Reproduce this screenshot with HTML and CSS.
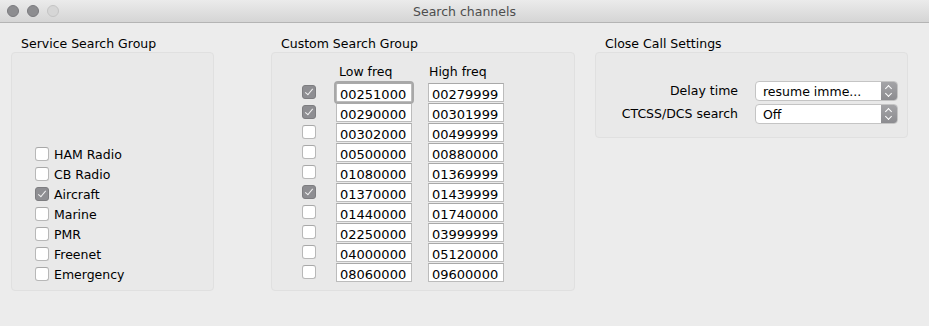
FILE: index.html
```html
<!DOCTYPE html>
<html lang="en">
<head>
  <meta charset="UTF-8">
  <title>Search channels</title>
  <link rel="stylesheet" href="styles.css">
</head>
<body>

  <div class="titlebar">
    <div class="lights">
      <span class="light"></span>
      <span class="light"></span>
      <span class="light off"></span>
    </div>
    <div class="title">Search channels</div>
  </div>

  <div class="content">

    <div class="group service">
      <div class="group-title">Service Search Group</div>
      <div class="group-box">
        <label class="check-row"><span class="check"></span>HAM Radio</label>
        <label class="check-row"><span class="check"></span>CB Radio</label>
        <label class="check-row"><span class="check on"></span>Aircraft</label>
        <label class="check-row"><span class="check"></span>Marine</label>
        <label class="check-row"><span class="check"></span>PMR</label>
        <label class="check-row"><span class="check"></span>Freenet</label>
        <label class="check-row"><span class="check"></span>Emergency</label>
      </div>
    </div>

    <div class="group custom">
      <div class="group-title">Custom Search Group</div>
      <div class="group-box">
        <div class="freq-head">
          <span class="head-low">Low freq</span>
          <span class="head-high">High freq</span>
        </div>
        <div class="freq-row"><span class="check on"></span><span class="field focused">00251000</span><span class="field">00279999</span></div>
        <div class="freq-row"><span class="check on"></span><span class="field">00290000</span><span class="field">00301999</span></div>
        <div class="freq-row"><span class="check"></span><span class="field">00302000</span><span class="field">00499999</span></div>
        <div class="freq-row"><span class="check"></span><span class="field">00500000</span><span class="field">00880000</span></div>
        <div class="freq-row"><span class="check"></span><span class="field">01080000</span><span class="field">01369999</span></div>
        <div class="freq-row"><span class="check on"></span><span class="field">01370000</span><span class="field">01439999</span></div>
        <div class="freq-row"><span class="check"></span><span class="field">01440000</span><span class="field">01740000</span></div>
        <div class="freq-row"><span class="check"></span><span class="field">02250000</span><span class="field">03999999</span></div>
        <div class="freq-row"><span class="check"></span><span class="field">04000000</span><span class="field">05120000</span></div>
        <div class="freq-row"><span class="check"></span><span class="field">08060000</span><span class="field">09600000</span></div>
      </div>
    </div>

    <div class="group closecall">
      <div class="group-title">Close Call Settings</div>
      <div class="group-box">
        <div class="setting-row">
          <span class="setting-label">Delay time</span>
          <div class="popup"><span class="popup-value">resume imme...</span><span class="popup-arrows"></span></div>
        </div>
        <div class="setting-row">
          <span class="setting-label">CTCSS/DCS search</span>
          <div class="popup"><span class="popup-value">Off</span><span class="popup-arrows"></span></div>
        </div>
      </div>
    </div>

  </div>

</body>
</html>
```

FILE: styles.css
```css
body {
  margin: 0;
  background-color: #ececec;
  font-family: "DejaVu Sans", "Lucida Grande", sans-serif;
  font-size: 12.5px;
  color: #000;
  width: 929px;
  height: 326px;
  overflow: hidden;
}

/* title bar */

.titlebar {
  height: 22px;
  background: linear-gradient(#ebebeb, #d5d5d5);
  border-bottom: 1px solid #b4b4b4;
  display: flex;
  align-items: center;
  position: relative;
}

.lights {
  display: flex;
  gap: 8px;
  padding-left: 7px;
}

.light {
  box-sizing: border-box;
  width: 12px;
  height: 12px;
  border-radius: 50%;
  background-color: #8d8d90;
  border: 1px solid #7a7a7e;
}

.light.off {
  background-color: #d6d6d6;
  border-color: #c4c4c4;
}

.title {
  position: absolute;
  left: 0;
  right: 0;
  text-align: center;
  color: #4d4d4d;
  font-size: 12.5px;
}

/* groups */

.content {
  display: flex;
  padding: 13px 0 0 11px;
}

.group {
  display: flex;
  flex-direction: column;
}

.group-title {
  height: 16px;
  line-height: 16px;
  padding-left: 10px;
}

.group-box {
  box-sizing: border-box;
  background-color: #e9e9e9;
  border: 1px solid #e0e0e0;
  border-radius: 4px;
}

.service {
  width: 203px;
}

.service .group-box {
  height: 239px;
  display: flex;
  flex-direction: column;
  justify-content: flex-end;
  padding: 0 0 6px 23px;
}

.custom {
  width: 304px;
  margin-left: 57px;
}

.custom .group-box {
  height: 239px;
  padding: 9px 0 0 30px;
}

.closecall {
  width: 313px;
  margin-left: 20px;
}

.closecall .group-box {
  height: 86px;
  padding: 27px 9px 0 0;
}

/* checkboxes */

.check-row {
  display: flex;
  align-items: center;
  height: 20px;
  gap: 5px;
}

.check {
  box-sizing: border-box;
  width: 14px;
  height: 14px;
  background-color: #fff;
  border: 1px solid #b8b8b8;
  border-top-color: #a8a8a8;
  border-radius: 3px;
  position: relative;
  flex-shrink: 0;
}

.check.on {
  background-color: #8e8e92;
  border-color: #7d7d80;
}

.check.on::after {
  content: "";
  position: absolute;
  left: 4px;
  top: 1px;
  width: 3px;
  height: 7px;
  border: solid #f2f2f2;
  border-width: 0 1.3px 1.3px 0;
  transform: rotate(40deg);
}

/* frequency table */

.freq-head {
  height: 20px;
  line-height: 20px;
  position: relative;
}

.head-low {
  margin-left: 37px;
}

.head-high {
  position: absolute;
  left: 127px;
}

.freq-row {
  display: flex;
  align-items: center;
  height: 20px;
}

.freq-row .check {
  margin-right: 20px;
}

.field {
  box-sizing: border-box;
  width: 76px;
  height: 19px;
  background-color: #fff;
  border: 1px solid #bcbcbc;
  border-top-color: #a9a9a9;
  padding: 2px 0 0 3px;
  line-height: 17px;
  font-size: 13px;
}

.field + .field {
  margin-left: 16px;
}

.field.focused {
  box-shadow: 0 0 0 2px #a8a8a8;
  border-radius: 2px;
}

/* settings */

.setting-row {
  display: flex;
  align-items: center;
  justify-content: flex-end;
  height: 21px;
  margin-bottom: 2px;
}

.setting-label {
  margin-right: 17px;
}

.popup {
  box-sizing: border-box;
  width: 143px;
  height: 20px;
  display: flex;
  background-color: #fff;
  border: 1px solid #c4c4c4;
  border-radius: 4px;
  overflow: hidden;
}

.popup-value {
  flex: 1;
  padding-left: 7px;
  line-height: 19px;
}

.popup-arrows {
  width: 16px;
  background: linear-gradient(#a4a4a7, #8c8c90);
  position: relative;
}

.popup-arrows::before,
.popup-arrows::after {
  content: "";
  position: absolute;
  left: 5px;
  width: 4px;
  height: 4px;
  border: solid #fff;
  border-width: 1.3px 0 0 1.3px;
}

.popup-arrows::before {
  top: 4px;
  transform: rotate(45deg);
}

.popup-arrows::after {
  top: 9px;
  transform: rotate(225deg);
}
```
